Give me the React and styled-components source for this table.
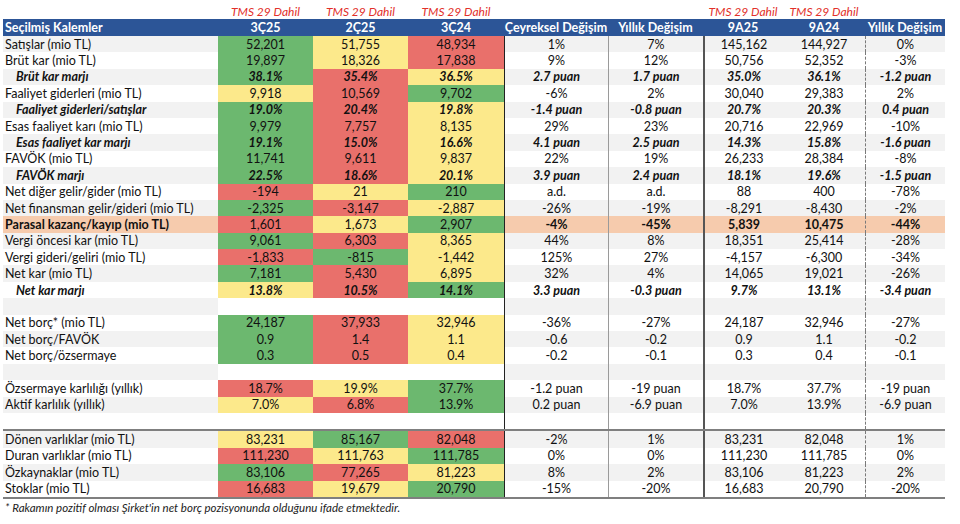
import React from "react";
import styled, { createGlobalStyle } from "styled-components";

const GlobalStyle = createGlobalStyle`
  body {
    margin: 0;
    background: #ffffff;
    font-family: Lato, "Open Sans", sans-serif;
    color: #111111;
  }
`;

const GRID = "215px 95px 95px 96px 104px 95px 80px 82px 80px";

const tones = {
  G: "#6cb86f",
  Y: "#fce98b",
  R: "#e9706b",
};

const colBorder = [
  "none",
  "none",
  "none",
  "none",
  "1px solid #222222",
  "1px solid #9a9a9a",
  "2px solid #555555",
  "none",
  "1px dashed #7a7a7a",
];

const Page = styled.div`
  width: 942px;
  padding: 3px 0 0 3px;
`;

const TmsRow = styled.div`
  display: grid;
  grid-template-columns: ${GRID};
  height: 16px;
  align-items: center;
`;

const TmsLabel = styled.div`
  text-align: center;
  color: #e2302a;
  font-style: italic;
  font-size: 12px;
`;

const HeaderRow = styled.div`
  display: grid;
  grid-template-columns: ${GRID};
  height: 17px;
  background: #2c5597;
  color: #ffffff;
  font-weight: 700;
  font-size: 12.5px;
  align-items: center;
`;

const HeadCell = styled.div`
  text-align: ${(p) => (p.$left ? "left" : "center")};
  padding-left: ${(p) => (p.$left ? "2px" : "0")};
  white-space: nowrap;
`;

const Row = styled.div`
  display: grid;
  grid-template-columns: ${GRID};
  height: 16.4px;
  font-size: 12.5px;
  font-weight: ${(p) => (p.$strong ? 700 : 400)};
  font-style: ${(p) => (p.$italic ? "italic" : "normal")};
`;

const Cell = styled.div`
  box-sizing: border-box;
  display: flex;
  align-items: center;
  justify-content: ${(p) => (p.$label ? "flex-start" : "center")};
  padding-left: ${(p) => (p.$label ? (p.$indent ? "13px" : "2px") : "0")};
  white-space: nowrap;
  border-left: ${(p) => colBorder[p.$col] || "none"};
  background: ${(p) => p.$bg};
  font-weight: ${(p) => (p.$plain ? 400 : "inherit")};
`;

const Rule = styled.div`
  height: 2px;
  background: #7f7f7f;
`;

const Footnote = styled.div`
  font-size: 11.5px;
  font-style: italic;
  padding: 2px 0 0 2px;
  color: #222222;
`;

const rows = [
  { l: "Satışlar (mio TL)", c: "GYR", v: ["52,201", "51,755", "48,934", "1%", "7%", "145,162", "144,927", "0%"] },
  { l: "Brüt kar (mio TL)", c: "GYR", v: ["19,897", "18,326", "17,838", "9%", "12%", "50,756", "52,352", "-3%"] },
  { l: "Brüt kar marjı", t: "m", c: "GRY", v: ["38.1%", "35.4%", "36.5%", "2.7 puan", "1.7 puan", "35.0%", "36.1%", "-1.2 puan"] },
  { l: "Faaliyet giderleri (mio TL)", c: "YRG", v: ["9,918", "10,569", "9,702", "-6%", "2%", "30,040", "29,383", "2%"] },
  { l: "Faaliyet giderleri/satışlar", t: "m", c: "GRY", v: ["19.0%", "20.4%", "19.8%", "-1.4 puan", "-0.8 puan", "20.7%", "20.3%", "0.4 puan"] },
  { l: "Esas faaliyet karı (mio TL)", c: "GRY", v: ["9,979", "7,757", "8,135", "29%", "23%", "20,716", "22,969", "-10%"] },
  { l: "Esas faaliyet kar marjı", t: "m", c: "GRY", v: ["19.1%", "15.0%", "16.6%", "4.1 puan", "2.5 puan", "14.3%", "15.8%", "-1.6 puan"] },
  { l: "FAVÖK (mio TL)", c: "GRY", v: ["11,741", "9,611", "9,837", "22%", "19%", "26,233", "28,384", "-8%"] },
  { l: "FAVÖK marjı", t: "m", c: "GRY", v: ["22.5%", "18.6%", "20.1%", "3.9 puan", "2.4 puan", "18.1%", "19.6%", "-1.5 puan"] },
  { l: "Net diğer gelir/gider (mio TL)", c: "RYG", v: ["-194", "21", "210", "a.d.", "a.d.", "88", "400", "-78%"] },
  { l: "Net finansman gelir/gideri (mio TL)", c: "GRY", v: ["-2,325", "-3,147", "-2,887", "-26%", "-19%", "-8,291", "-8,430", "-2%"] },
  { l: "Parasal kazanç/kayıp (mio TL)", t: "h", c: "RYG", v: ["1,601", "1,673", "2,907", "-4%", "-45%", "5,839", "10,475", "-44%"] },
  { l: "Vergi öncesi kar (mio TL)", c: "GRY", v: ["9,061", "6,303", "8,365", "44%", "8%", "18,351", "25,414", "-28%"] },
  { l: "Vergi gideri/geliri (mio TL)", c: "RGY", v: ["-1,833", "-815", "-1,442", "125%", "27%", "-4,157", "-6,300", "-34%"] },
  { l: "Net kar (mio TL)", c: "GRY", v: ["7,181", "5,430", "6,895", "32%", "4%", "14,065", "19,021", "-26%"] },
  { l: "Net kar marjı", t: "m", c: "YRG", v: ["13.8%", "10.5%", "14.1%", "3.3 puan", "-0.3 puan", "9.7%", "13.1%", "-3.4 puan"] },
  { t: "b" },
  { l: "Net borç* (mio TL)", c: "GRY", v: ["24,187", "37,933", "32,946", "-36%", "-27%", "24,187", "32,946", "-27%"] },
  { l: "Net borç/FAVÖK", c: "GRY", v: ["0.9", "1.4", "1.1", "-0.6", "-0.2", "0.9", "1.1", "-0.2"] },
  { l: "Net borç/özsermaye", c: "GRY", v: ["0.3", "0.5", "0.4", "-0.2", "-0.1", "0.3", "0.4", "-0.1"] },
  { t: "b" },
  { l: "Özsermaye karlılığı (yıllık)", c: "RYG", v: ["18.7%", "19.9%", "37.7%", "-1.2 puan", "-19 puan", "18.7%", "37.7%", "-19 puan"] },
  { l: "Aktif karlılık (yıllık)", c: "YRG", v: ["7.0%", "6.8%", "13.9%", "0.2 puan", "-6.9 puan", "7.0%", "13.9%", "-6.9 puan"] },
  { t: "b" },
  { l: "Dönen varlıklar (mio TL)", c: "YGR", v: ["83,231", "85,167", "82,048", "-2%", "1%", "83,231", "82,048", "1%"], rule: true },
  { l: "Duran varlıklar (mio TL)", c: "RYG", v: ["111,230", "111,763", "111,785", "0%", "0%", "111,230", "111,785", "0%"] },
  { l: "Özkaynaklar (mio TL)", c: "GRY", v: ["83,106", "77,265", "81,223", "8%", "2%", "83,106", "81,223", "2%"] },
  { l: "Stoklar (mio TL)", c: "RYG", v: ["16,683", "19,679", "20,790", "-15%", "-20%", "16,683", "20,790", "-20%"] },
];

const heads = ["3Ç25", "2Ç25", "3Ç24", "Çeyreksel Değişim", "Yıllık Değişim", "9A25", "9A24", "Yıllık Değişim"];
const tms = [true, true, true, false, false, true, true, false];

function TableRow({ row, index }) {
  const stripe = index % 2 === 0 ? "#f2f2f2" : "#ffffff";
  const base = row.t === "h" ? "#f6cbad" : stripe;
  const values = row.v || Array(8).fill("");

  return (
    <Row $strong={row.t === "m" || row.t === "h"} $italic={row.t === "m"}>
      <Cell $label $indent={row.t === "m"} $col={0} $bg={base}>
        {row.l || ""}
      </Cell>
      {values.map((val, i) => {
        const toned = i < 3;
        const bg = toned ? (row.c ? tones[row.c[i]] : "#ffffff") : base;
        return (
          <Cell key={i} $col={i + 1} $bg={bg} $plain={toned && row.t === "h"}>
            {val}
          </Cell>
        );
      })}
    </Row>
  );
}

export default function App() {
  return (
    <Page>
      <GlobalStyle />
      <TmsRow>
        <div />
        {tms.map((on, i) => (
          <TmsLabel key={i}>{on ? "TMS 29 Dahil" : ""}</TmsLabel>
        ))}
      </TmsRow>
      <HeaderRow>
        <HeadCell $left>Seçilmiş Kalemler</HeadCell>
        {heads.map((h, i) => (
          <HeadCell key={i}>{h}</HeadCell>
        ))}
      </HeaderRow>
      {rows.map((row, i) => (
        <React.Fragment key={i}>
          {row.rule && <Rule />}
          <TableRow row={row} index={i} />
        </React.Fragment>
      ))}
      <Rule />
      <Footnote>* Rakamın pozitif olması Şirket'in net borç pozisyonunda olduğunu ifade etmektedir.</Footnote>
    </Page>
  );
}
